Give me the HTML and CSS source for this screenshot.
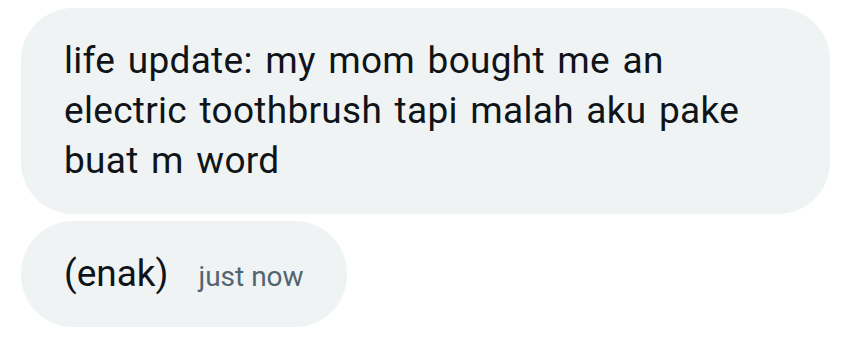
FILE: index.html
```html
<!DOCTYPE html>
<html lang="en">
<head>
    <meta charset="UTF-8">
    <meta name="viewport" content="width=device-width, initial-scale=1.0">
    <title>Messages</title>
    <link rel="stylesheet" href="styles.css">
</head>
<body>
    <div class="thread">
        <div class="bubble bubble-wide">
            <span class="text">life update: my mom bought me an<br>electric toothbrush tapi malah aku pake<br>buat m word</span>
        </div>
        <div class="bubble">
            <span class="text">(enak)</span>
            <span class="time">just now</span>
        </div>
    </div>
</body>
</html>
```

FILE: styles.css
```css
body {
    margin: 0;
    background: #fff;
    font-family: "Roboto", "Liberation Sans", sans-serif;
    color: #0f1419;
}
.thread {
    display: flex;
    flex-direction: column;
    align-items: flex-start;
    gap: 7px;
    padding: 8px 21px;
}
.bubble {
    max-width: 723px;
    background: #eff3f4;
    border-radius: 52px;
    padding: 28px 43px;
}
.bubble-wide { width: 723px; }
.text {
    font-size: 37px;
    line-height: 50px;
}
.bubble-wide .text { word-spacing: 3px; letter-spacing: 0.3px; }
.time {
    margin-left: 26px;
    font-size: 28px;
    color: #536471;
}
```
